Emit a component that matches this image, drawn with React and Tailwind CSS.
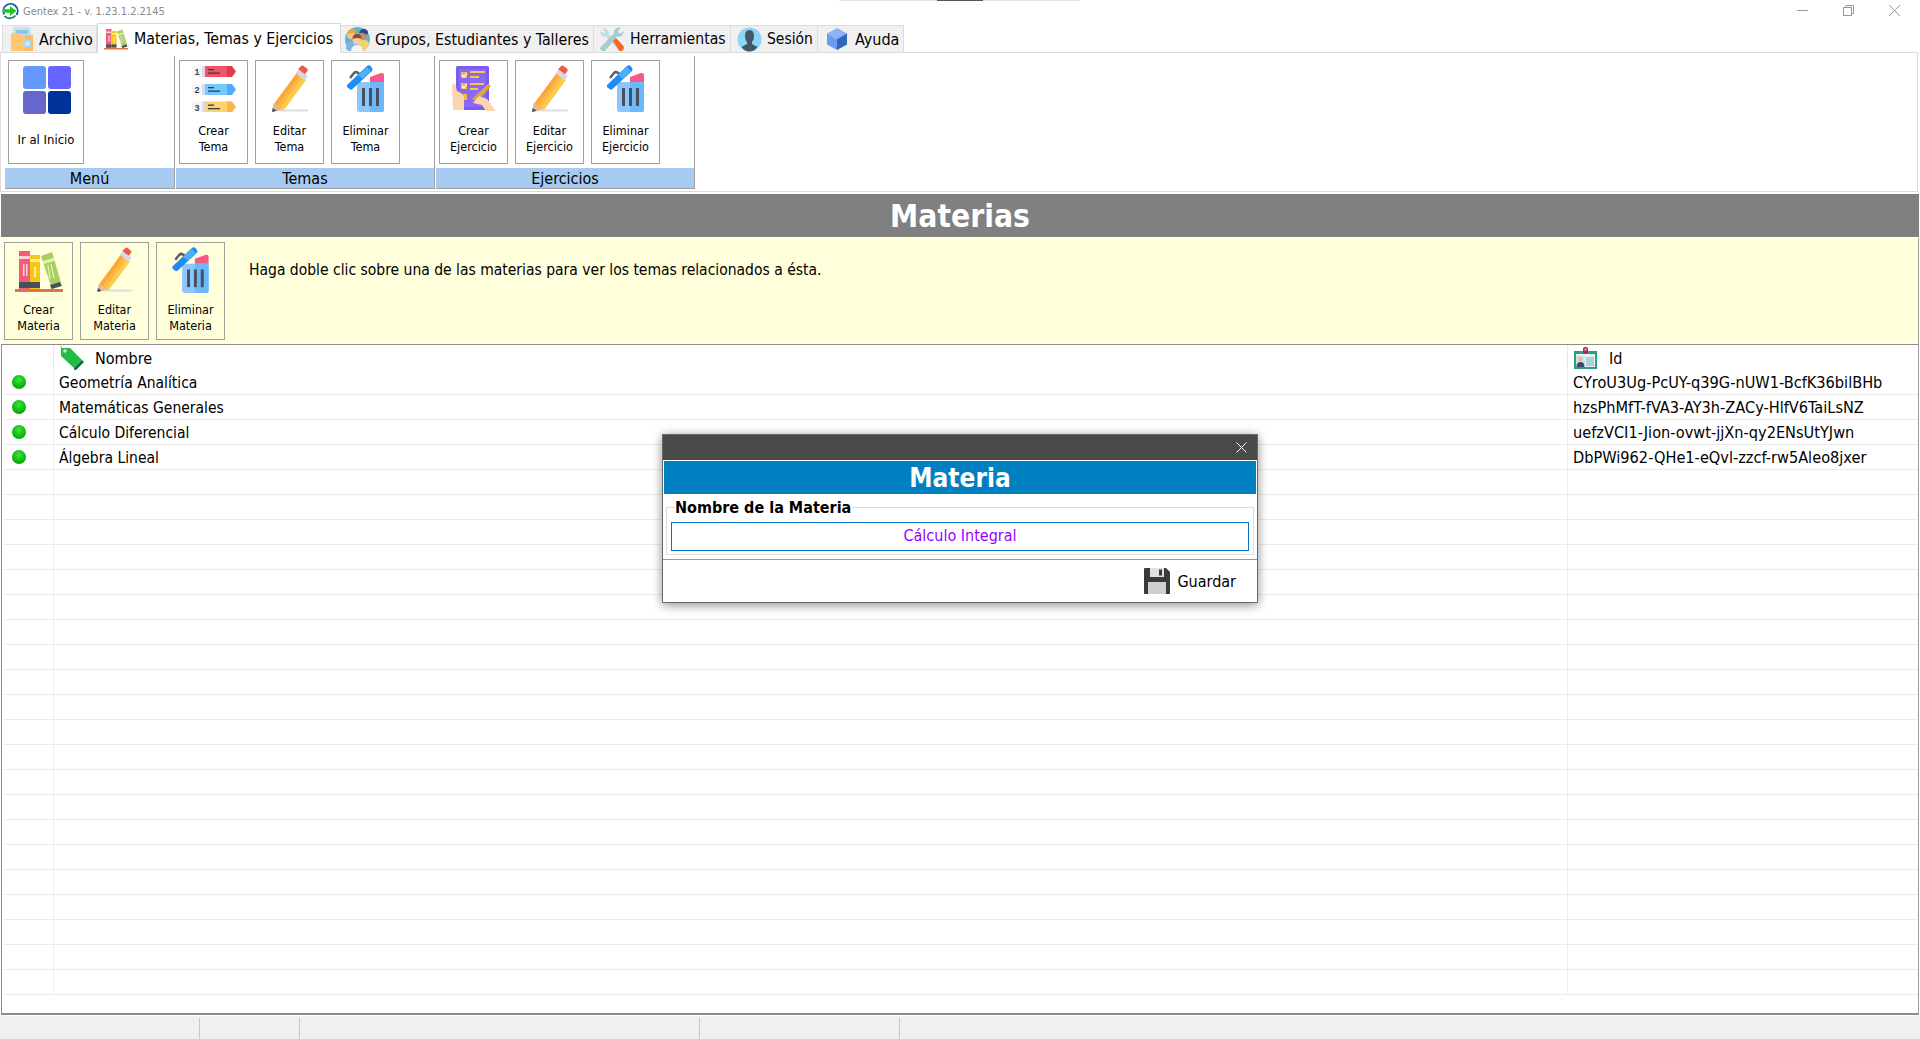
import React from "react";

const AppIcon = () => (
  <svg width="18" height="18" viewBox="0 0 18 18" className="mb-[2px] ml-[1px] mr-[4px] shrink-0">
    <path d="M3.2 12.5A7.2 7.2 0 1 1 15.5 13" fill="none" stroke="#0f5f8c" strokeWidth="1.8" />
    <path d="M3.5 14a7.2 7.2 0 0 0 11-.5" fill="none" stroke="#0f7f6c" strokeWidth="1.8" />
    <path d="M2 7.2h7V4l6.5 5-6.5 5v-3.2H2z" fill="#22c422" />
  </svg>
);

const FolderIcon = () => (
  <svg width="24" height="26" viewBox="0 0 24 26">
    <path d="M4 1h15l2 3v8H3V4z" fill="#bfe3f2" />
    <path d="M6 4h12v4H6z" fill="#8cc6e6" />
    <path d="M1 9q0-2 2-2h5l3 2h10q2 0 2 2v14H1z" fill="#ffc773" />
    <path d="M15 9h8v16h-8z" fill="#ffbb5c" />
    <rect x="14" y="14" width="7" height="7" fill="#a9d7ee" />
    <rect x="15.5" y="15.5" width="4" height="4" fill="#cdeaf7" />
  </svg>
);

const Books = ({ w = 24, h = 22 }) => (
  <svg width={w} height={h} viewBox="0 0 48 44">
    <rect x="4" y="2" width="11" height="38" fill="#f25c78" />
    <rect x="4" y="7" width="11" height="3" fill="#ffd0d8" />
    <rect x="4" y="33" width="11" height="6" fill="#46505e" />
    <rect x="8" y="15" width="1.5" height="12" fill="#ffd0d8" />
    <rect x="11" y="15" width="1.5" height="12" fill="#ffd0d8" />
    <rect x="15" y="6" width="10" height="34" fill="#f9c516" />
    <rect x="15" y="10" width="10" height="3" fill="#fff0a8" />
    <rect x="15" y="33" width="10" height="6" fill="#46505e" />
    <rect x="19" y="18" width="2" height="10" fill="#fff0a8" />
    <path d="M26 7l11-4 10 34-10 3z" fill="#a8cf62" />
    <path d="M27.5 12l11-3 1 3-11 3z" fill="#e8f2b0" />
    <path d="M35 36l10-3 1.500 4-10 3z" fill="#46505e" />
    <path d="M33 16l2 14M36 15l3 14" stroke="#e8f2b0" strokeWidth="1.200" />
    <rect x="0" y="40" width="48" height="3" fill="#d9744c" />
  </svg>
);

const GroupIcon = () => (
  <svg width="25" height="25" viewBox="0 0 25 25">
    <circle cx="12.5" cy="12.5" r="12.5" fill="#5fb8c9" />
    <path d="M1 22q0-7 6-8t6 4v6H4z" fill="#7fb2e5" />
    <circle cx="6" cy="8" r="4" fill="#f7c58e" />
    <path d="M2 7q1-5 5-5t4 4q-5 0-9 1z" fill="#f2a33a" />
    <path d="M13 18q1-5 6-5t5 4l-4 7h-7z" fill="#f5d36b" />
    <circle cx="18" cy="8" r="4" fill="#c98a5e" />
    <path d="M14 6q1-4 5-4t4 4l-1 2q-4-3-8-2z" fill="#274a8c" />
    <path d="M6 25q0-7 6-7t6 7z" fill="#f4f4f4" />
    <circle cx="12" cy="13" r="4.500" fill="#f7c9a4" />
    <path d="M7.500 12q0-5 4.500-5t4.500 5q-4-2-9 0z" fill="#8c4a2f" />
  </svg>
);

const ToolsIcon = () => (
  <svg width="25" height="25" viewBox="0 0 25 25">
    <path d="M3 2l3 3-1.500 1.500-3-3A5 5 0 0 0 7 10l14 14 3-3L10 7A5 5 0 0 0 3 2z" fill="#c3dde3" />
    <path d="M22 1l-3 3 1 2 2 .5 2.500-3a5 5 0 0 1-6.500 6L6 24H3l-2-2 .500-2L15 6.500A5 5 0 0 1 22 1z" fill="#a9ccd4" />
    <path d="M14 14l3-3 7.500 8q1 2-.5 4t-4 .5z" fill="#f26a21" />
  </svg>
);

const UserIcon = () => (
  <svg width="25" height="25" viewBox="0 0 25 25">
    <circle cx="12.500" cy="12.500" r="12" fill="#8cd6f5" />
    <path d="M8 9q0-6 4.500-6T17 9q0 4-2 6v2l5.500 3q-3.500 4.500-8 4.500t-8-4.500L10 17v-2q-2-2-2-6z" fill="#445566" />
  </svg>
);

const CubeIcon = () => (
  <svg width="22" height="24" viewBox="0 0 22 24">
    <path d="M11 1l10 5.500L11 12 1 6.500z" fill="#8cb4f5" />
    <path d="M1 6.500L11 12v11L1 17.500z" fill="#6a9bef" />
    <path d="M21 6.500L11 12v11l10-5.500z" fill="#3366bb" />
  </svg>
);

const GridIcon = () => (
  <div className="ml-px grid grid-cols-[23px_23px] grid-rows-[23px_23px] gap-[2px] pt-px">
    <div className="rounded-[3px] bg-[#6699ff]" />
    <div className="rounded-[3px] bg-[#6666ff]" />
    <div className="rounded-[3px] bg-[#6666cc]" />
    <div className="rounded-[3px] bg-[#003399]" />
  </div>
);

const ListRow = ({ y, n, color, dark }) => (
  <g>
    <rect x="0" y={y} width="10" height="11" fill="#f6f6f8" />
    <text x="5" y={y + 9} fontSize="9" fontWeight="700" textAnchor="middle" fill="#34495e" fontFamily="Liberation Sans, sans-serif">{n}</text>
    <rect x="10" y={y} width="3" height="11" fill="#dcdce8" />
    <rect x="13" y={y} width="27" height="11" fill={color} />
    <path d={`M35 ${y}h5l4 5.500-4 5.500h-5z`} fill={dark} />
    <rect x="16" y={y + 3} width="6" height="1.300" fill="#34404e" />
    <rect x="16" y={y + 6.500} width="12" height="1.300" fill="#34404e" />
  </g>
);

const ListIcon = () => (
  <svg width="44" height="47" viewBox="0 0 44 47">
    <ListRow y={1} n="1" color="#ee5566" dark="#e23a4e" />
    <ListRow y={19} n="2" color="#74c8fb" dark="#55aaff" />
    <ListRow y={36.500} n="3" color="#fdd268" dark="#fbb64e" />
  </svg>
);

const Pencil = ({ w = 36, h = 48 }) => (
  <svg width={w} height={h} viewBox="0 0 35 47">
    <path d="M2 38L24 8l9 7-22 30z" fill="#fdc94f" />
    <path d="M2 38L24 8l3 2.500L5 41z" fill="#fda63a" />
    <path d="M5.500 41L27 11l2 1.500L7.500 43z" fill="#fdb843" />
    <path d="M24 8l3-4 9 7-3 4z" fill="#d8d8e4" transform="translate(-1 0)" />
    <path d="M25.500 4l3-3q1-1 2.500 0l3 2.500q1.500 1 .5 2.500l-2.500 3z" fill="#ee5a48" />
    <path d="M0 46l1.500-9L11 44z" fill="#e8b98c" />
    <path d="M0 46l.6-4 3.500 2.700z" fill="#34495e" />
    <rect x="8" y="43.500" width="27" height="2" fill="#dcdce8" />
  </svg>
);

const Trash = ({ w = 37, h = 47 }) => (
  <svg width={w} height={h} viewBox="0 0 37 47">
    <rect x="10" y="17" width="27" height="30" rx="2.500" fill="#8cc6fb" />
    <path d="M23 17h14v28q0 2-2 2H23z" fill="#6bb8fb" />
    <path d="M23 12l11-4q3-.5 3 2v7H23z" fill="#f8598b" />
    <rect x="15" y="23" width="3" height="18" fill="#46505e" />
    <rect x="22" y="23" width="3" height="18" fill="#46505e" />
    <rect x="29" y="23" width="3" height="18" fill="#46505e" />
    <path d="M3 13l4-5q2-2 4 0l3 2" fill="none" stroke="#5a5f66" strokeWidth="2.500" />
    <path d="M0 20l20-19q2-1.500 3.500 0l1.500 2q1 1.500 0 3L5.500 24q-1.500 1.500-3 0L0 22z" fill="#1e8cf0" />
    <path d="M11 10l9-8 4 4-8 8z" fill="#4fb0f7" />
  </svg>
);

const ExerciseIcon = () => (
  <svg width="44" height="47" viewBox="0 0 44 47">
    <rect x="4" y="1" width="33" height="44" rx="1.500" fill="#7c5cf0" />
    <rect x="7" y="4" width="27" height="38" fill="#8a68f5" />
    <rect x="9" y="7" width="6" height="6" fill="#f5b942" />
    <rect x="9" y="18" width="6" height="6" fill="#f5b942" />
    <rect x="9" y="29" width="6" height="6" fill="#f5b942" />
    <path d="M10 10l2 2 3-4" stroke="#fff" strokeWidth="1.200" fill="none" />
    <path d="M10 21l2 2 3-4" stroke="#fff" strokeWidth="1.200" fill="none" />
    <rect x="18" y="6" width="15" height="2" fill="#f5c94e" />
    <rect x="18" y="11" width="9" height="2" fill="#f5c94e" />
    <rect x="18" y="18" width="14" height="2" fill="#f5c94e" />
    <rect x="18" y="23" width="8" height="2" fill="#f5c94e" />
    <path d="M0 19l3 -1 2 8 4 2 3 4v13H1z" fill="#fbd5ad" />
    <path d="M20 34l16-15 3 2-14 16z" fill="#d9a838" />
    <path d="M21 38l6-7 8 3 8 11v1h-9l-4-6z" fill="#fbd5ad" />
  </svg>
);

const TagIcon = () => (
  <svg width="24" height="24" viewBox="0 0 24 24">
    <path d="M0 0l3 3" stroke="#d9534f" strokeWidth="0.800" />
    <path d="M1 2h9L22 14l-8 8L1 10z" fill="#22bb44" />
    <path d="M14 22l8-8 2 2-8 8q-1 .5-2-.5z" fill="#0c6b3a" />
    <circle cx="5" cy="5" r="1.800" fill="#c8f0d0" />
  </svg>
);

const IdIcon = () => (
  <svg width="24" height="24" viewBox="0 0 24 24">
    <rect x="1" y="5" width="23" height="18" fill="#2f9e7a" />
    <rect x="3" y="8" width="19" height="13" fill="#e8f2f2" />
    <rect x="3" y="10" width="9" height="11" fill="#cfe0e8" />
    <rect x="13" y="11" width="8" height="9" fill="#a9d3dc" />
    <circle cx="7.500" cy="13" r="2.200" fill="#e8b98c" />
    <path d="M3.500 21q0-5 4-5t4 5z" fill="#3a4a66" />
    <rect x="10" y="1" width="5" height="7" rx="2" fill="#b0245e" />
    <rect x="11.500" y="2.500" width="2" height="2" fill="#f7a8c8" />
  </svg>
);

const SaveIcon = () => (
  <svg width="26" height="26" viewBox="0 0 26 26">
    <path d="M0 1q0-1 1-1h21l4 4v21q0 1-1 1H1q-1 0-1-1z" fill="#3a3a3a" />
    <rect x="6" y="0" width="14" height="9" fill="#e0e0e0" />
    <rect x="15" y="1.500" width="3" height="6" fill="#3a3a3a" />
    <rect x="4" y="14" width="18" height="12" fill="#cfcfcf" />
  </svg>
);

const Tab = ({ icon, label, active, gap = "gap-[4px]", w, pl = "pl-[4px]", size = "text-[15.8px]" }) => (
  <div
    className={
      active
        ? `relative z-10 -mb-px flex h-[30px] items-center ${gap} ${pl} border-x border-t border-[#d9d9d9] bg-white`
        : `flex h-[27px] items-center ${gap} ${pl} border-r border-t border-[#dcdcdc] bg-[#f0f0f0]`
    }
    style={{ width: w }}
  >
    <span className="flex w-[25px] shrink-0 items-center justify-center">{icon}</span>
    <span className={`${size} pt-px leading-none text-black whitespace-nowrap`}>{label}</span>
  </div>
);

const Big = ({ icon, lines, yellow }) => (
  <div className={`flex w-[69px] flex-col items-center border border-[#a0a0a0] pt-[4px] ${yellow ? "h-[98px]" : "h-[104px]"}`}>
    <div className={`flex w-full items-start justify-center ${yellow ? "h-[54px]" : "h-[57px]"}`}>{icon}</div>
    <div className="flex h-[32px] w-full flex-col items-center justify-center pt-[2px] text-center text-[12.5px] leading-[16px] text-black">
      {lines.map((l) => (
        <span key={l}>{l}</span>
      ))}
    </div>
  </div>
);

const Group = ({ title, w, children }) => (
  <div className={`flex h-[133px] flex-col border-b border-r border-[#a0a0a0] ${w}`}>
    <div className="flex h-[112px] gap-[7px] pl-[3px] pt-[4px]">{children}</div>
    <div className="flex h-[20px] items-center justify-center bg-[#a6caf0] pt-px text-[16px] leading-none text-black">{title}</div>
  </div>
);

const rows = [
  ["Geometría Analítica", "CYroU3Ug-PcUY-q39G-nUW1-BcfK36bilBHb"],
  ["Matemáticas Generales", "hzsPhMfT-fVA3-AY3h-ZACy-HlfV6TaiLsNZ"],
  ["Cálculo Diferencial", "uefzVCI1-Jion-ovwt-jjXn-qy2ENsUtYJwn"],
  ["Álgebra Lineal", "DbPWi962-QHe1-eQvl-zzcf-rw5Aleo8jxer"],
  ...Array.from({ length: 21 }, () => ["", ""]),
];

export default function App() {
  return (
    <div className="relative flex h-[1039px] w-[1920px] flex-col overflow-hidden bg-white font-['DejaVu_Sans_Condensed','DejaVu_Sans',sans-serif] text-black">
      {/* title bar */}
      <div className="flex h-[23px] items-center justify-between">
        <div className="flex items-center">
          <AppIcon />
          <span className="pt-[1px] text-[11px] text-[#8a8a8a]">Gentex 21 - v. 1.23.1.2.2145</span>
        </div>
        <div className="flex items-center gap-[35px] pb-[3px] pr-[20px] text-[#8c8c8c]">
          <svg width="11" height="11" viewBox="0 0 11 11"><path d="M0 5.500h11" stroke="#999" /></svg>
          <svg width="11" height="11" viewBox="0 0 11 11" fill="none" stroke="#999"><rect x="0.500" y="2.500" width="8" height="8" /><path d="M3 2.500v-2h7.500v8h-2" /></svg>
          <svg width="11" height="11" viewBox="0 0 11 11"><path d="M0 0l11 11M11 0L0 11" stroke="#999" /></svg>
        </div>
      </div>

      {/* tabs */}
      <div className="flex h-[29px] items-end pl-[2px]">
        <div className="flex h-[27px] w-[95px] items-center gap-[5px] border-l border-r border-t border-[#dcdcdc] bg-[#f0f0f0] pl-[7px]">
          <FolderIcon />
          <span className="pt-px text-[16px] leading-none">Archivo</span>
        </div>
        <Tab active icon={<Books />} label="Materias, Temas y Ejercicios" w={244} gap="gap-[6px]" pl="pl-[5px]" />
        <Tab icon={<GroupIcon />} label="Grupos, Estudiantes y Talleres" w={253} gap="gap-[5px]" pl="pl-[4px]" />
        <Tab icon={<ToolsIcon />} label="Herramientas" w={137} gap="gap-[6px]" pl="pl-[5px]" size="text-[15.6px]" />
        <Tab icon={<UserIcon />} label="Sesión" w={87} gap="gap-[5px]" pl="pl-[6px]" size="text-[15.5px]" />
        <Tab icon={<CubeIcon />} label="Ayuda" w={86} gap="gap-[6px]" pl="pl-[6px]" size="text-[16px]" />
      </div>

      {/* ribbon */}
      <div className="flex h-[140px] w-[1918px] gap-px border border-[#dcdcdc] pl-[4px] pt-[3px]">
        <Group title="Menú" w="w-[170px]">
          <div className="-mr-[7px] w-[76px]">
            <div className="flex h-[104px] w-[76px] flex-col items-center border border-[#a0a0a0] pt-[4px]">
              <div className="flex h-[57px] items-start justify-center"><GridIcon /></div>
              <div className="flex h-[32px] items-center pt-[4px] text-[13px]">Ir al Inicio</div>
            </div>
          </div>
        </Group>
        <Group title="Temas" w="w-[259px]">
          <Big icon={<ListIcon />} lines={["Crear", "Tema"]} />
          <Big icon={<Pencil />} lines={["Editar", "Tema"]} />
          <Big icon={<Trash />} lines={["Eliminar", "Tema"]} />
        </Group>
        <Group title="Ejercicios" w="w-[259px]">
          <Big icon={<ExerciseIcon />} lines={["Crear", "Ejercicio"]} />
          <Big icon={<Pencil />} lines={["Editar", "Ejercicio"]} />
          <Big icon={<Trash />} lines={["Eliminar", "Ejercicio"]} />
        </Group>
      </div>

      {/* main */}
      <div className="ml-px mt-[2px] flex w-[1918px] flex-col">
        <div className="flex h-[43px] items-center justify-center bg-[#808080] pt-[2px] text-[31.5px] font-bold leading-none text-white">Materias</div>
        <div className="mt-px flex h-[106px] border-r border-[#a0a0a0] bg-[#ffffdc] pl-[3px] pt-[4px]">
          <div className="flex gap-[7px]">
            <Big yellow icon={<div className="pt-[2px]"><Books w={48} h={44} /></div>} lines={["Crear", "Materia"]} />
            <Big yellow icon={<Pencil w={35} h={46} />} lines={["Editar", "Materia"]} />
            <Big yellow icon={<Trash w={37} h={46} />} lines={["Eliminar", "Materia"]} />
          </div>
          <div className="pl-[24px] pt-[18px] text-[15.5px] leading-[20px]">Haga doble clic sobre una de las materias para ver los temas relacionados a ésta.</div>
        </div>
        <div className="flex h-[671px] flex-col overflow-hidden border-b-2 border-l border-r border-t border-b-[#8c8c8c] border-l-[#8c8c8c] border-r-[#a0a0a0] border-t-[#8c8c8c]">
          <div className="flex h-[25px] shrink-0 text-[16px] leading-none">
            <div className="w-[52px] border-r border-[#e8e8e8]" />
            <div className="flex w-[1513px] items-center gap-[11px] pl-[6px]"><TagIcon /><span className="pt-[2px]">Nombre</span></div>
            <div className="flex flex-1 items-center gap-[12px] border-l border-[#e8e8e8] pl-[5px]"><IdIcon /><span className="pt-[2px]">Id</span></div>
          </div>
          {rows.map(([n, id], i) => (
            <div key={i} className="ml-[2px] flex h-[25px] shrink-0 border-b border-[#ebebeb] leading-none">
              <div className="flex w-[50px] items-center border-r border-[#efefef] pl-[8px]">
                {n && <div className="h-[14px] w-[14px] rounded-full bg-[radial-gradient(circle_at_50%_35%,#3ee83e,#07b007_65%,#058f05)]" />}
              </div>
              <div className="flex w-[1513px] items-center pl-[5px] pt-[4px] text-[15.5px] whitespace-nowrap">{n}</div>
              <div className="flex flex-1 items-center border-l border-[#efefef] pl-[5px] pt-[2px] text-[16.2px] whitespace-nowrap">{id}</div>
            </div>
          ))}
        </div>
      </div>

      {/* status bar */}
      <div className="mt-px flex h-[24px] flex-1 bg-[#f0f0f0] pt-[2px]">
        <div className="w-[200px] border-r border-[#c8c8c8]" />
        <div className="w-[100px] border-r border-[#c8c8c8]" />
        <div className="w-[400px] border-r border-[#c8c8c8]" />
        <div className="w-[200px] border-r border-[#c8c8c8]" />
      </div>

      {/* strip at the top edge */}
      <div className="absolute left-[839px] top-0 flex h-px w-[241px] bg-[#e4e4e4]">
        <div className="ml-[98px] h-px w-[46px] bg-[#555]" />
      </div>

      {/* dialog */}
      <div className="absolute left-[662px] top-[434px] flex h-[169px] w-[596px] flex-col border border-[#6a6a6a] bg-white shadow-[0_2px_10px_rgba(0,0,0,0.45)]">
        <div className="flex h-[25px] items-center justify-end bg-[#4a4a4a] pr-[10px]">
          <svg width="11" height="11" viewBox="0 0 11 11"><path d="M0.500 0.500l10 10M10.500 0.500l-10 10" stroke="#fff" /></svg>
        </div>
        <div className="mx-px mt-px flex h-[33px] items-center justify-center bg-[#0080c0] text-[26px] font-bold leading-none text-white">Materia</div>
        <div className="relative mx-[3px] mt-[13px] h-[48px] border border-[#dcdcdc] px-[4px] pt-[14px]">
          <span className="absolute left-[8px] top-[-10px] bg-white pr-[1px] text-[16px] font-bold leading-[20px]">Nombre de la Materia</span>
          <div className="flex h-[29px] items-center justify-center border border-[#0a70c4] pb-[2px] text-[16px] leading-none text-[#9900ff]">Cálculo Integral</div>
        </div>
        <div className="mt-[4px] flex flex-1 items-center justify-end gap-[7px] border-t border-[#9a9a9a] pr-[21px] text-[16px] leading-none">
          <SaveIcon />
          <span className="pt-[2px]">Guardar</span>
        </div>
      </div>
    </div>
  );
}
